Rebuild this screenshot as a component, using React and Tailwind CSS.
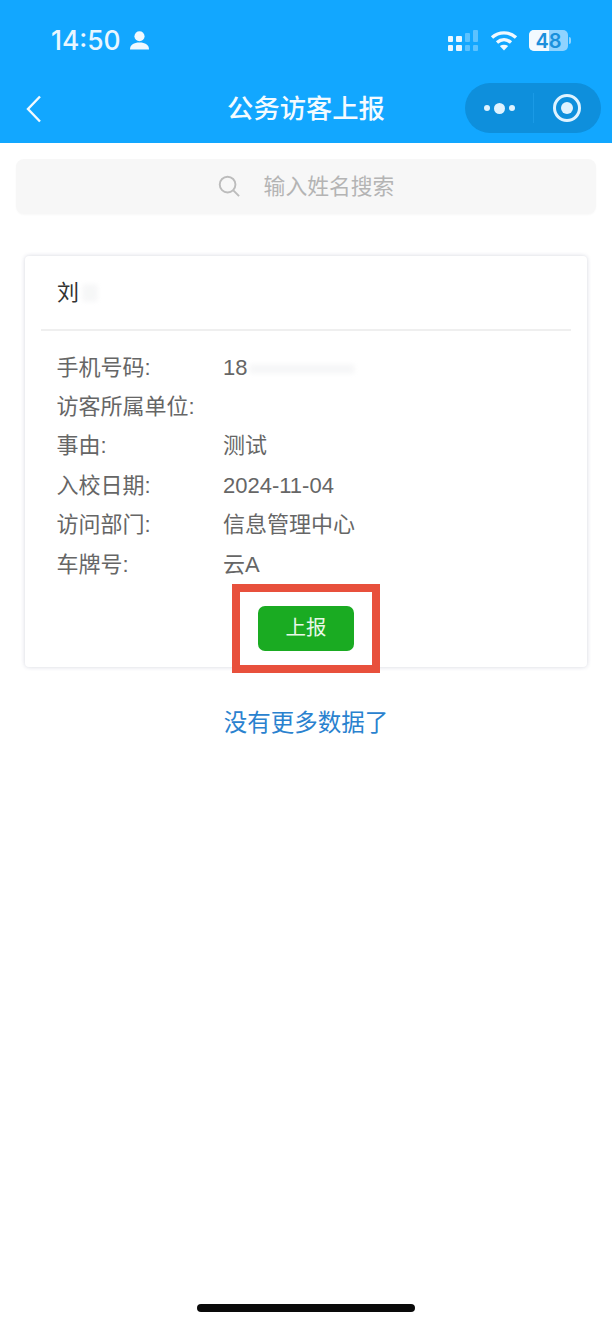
import React from 'react';

const rows = [
  { label: '手机号码:', value: '18', redacted: true },
  { label: '访客所属单位:', value: '' },
  { label: '事由:', value: '测试' },
  { label: '入校日期:', value: '2024-11-04' },
  { label: '访问部门:', value: '信息管理中心' },
  { label: '车牌号:', value: '云A' },
];

const fontStack = { fontFamily: '"Liberation Sans", "Noto Sans CJK SC", sans-serif' };

const StatusBar = () => (
  <div className="flex h-[82px] items-start justify-between pl-[51px] pr-[41px] pt-[24px]">
    <div className="flex items-center gap-[9px]">
      <span className="font-['Inter'] text-[26.4px] leading-[33px] font-medium text-[#e9f6ff]">14:50</span>
      <svg width="19" height="19" viewBox="1 1 18 18" fill="#f0f9ff">
        <circle cx="10" cy="6" r="4.8" />
        <path d="M1 18.5c0-4.6 3.6-6.6 9-6.6s9 2 9 6.6z" />
      </svg>
    </div>
    <div className="flex items-start gap-[11px] pt-[6px]">
      <svg width="31" height="22" viewBox="0 0 31 22">
        <rect x="0" y="6" width="5" height="6" rx="1" fill="#eaf7ff" />
        <rect x="0" y="15" width="5" height="6" rx="1" fill="#eaf7ff" />
        <rect x="8" y="6" width="6" height="6" rx="1" fill="#eaf7ff" />
        <rect x="8" y="15" width="6" height="6" rx="1" fill="#eaf7ff" />
        <rect x="17" y="3" width="5" height="9" rx="1" fill="#5cc2ff" />
        <rect x="17" y="15" width="5" height="6" rx="1" fill="#5cc2ff" />
        <rect x="25" y="0" width="5" height="12" rx="1" fill="#5cc2ff" />
        <rect x="25" y="15" width="5" height="6" rx="1" fill="#5cc2ff" />
      </svg>
      <svg width="28" height="21" viewBox="0 0 28 21" fill="none" stroke="#f0f9ff" strokeWidth="3.4">
        <path d="M2 7.5c7-6.2 17-6.2 24 0" />
        <path d="M7 12.5c4.2-3.6 9.8-3.6 14 0" />
        <path d="M14 20.5l-4.2-4.4c2.5-1.7 5.9-1.7 8.4 0z" fill="#f0f9ff" stroke="none" />
      </svg>
      <div className="flex items-center">
        <div className="relative flex h-[21px] w-[39px] items-center justify-center overflow-hidden rounded-[5px] bg-[#8fd3ff]">
          <div className="absolute inset-y-0 left-0 w-[20px] bg-[#f2faff]" />
          <span className="relative font-['Inter'] text-[20px] leading-none font-semibold text-[#1a90dc]">48</span>
        </div>
        <div className="ml-[1px] h-[7px] w-[2px] rounded-r-sm bg-[#8fd3ff]" />
      </div>
    </div>
  </div>
);

const NavBar = () => (
  <div className="relative flex h-[61px] items-start justify-center">
    <svg className="absolute left-[25px] top-[13px]" width="18" height="28" viewBox="0 0 18 28" fill="none" stroke="#f2faff" strokeWidth="2.4">
      <path d="M15 1.5L3 14l12 12.5" />
    </svg>
    <h1 className="pt-[10px] text-[26.3px] leading-[34px] font-medium text-[#f4fbff]">公务访客上报</h1>
    <div className="absolute left-[465px] top-[1px] flex h-[50px] w-[136px] items-center rounded-full bg-[#0e8fdc]">
      <div className="flex w-[68px] items-center justify-center gap-[4px]">
        <span className="h-[6px] w-[6px] rounded-full bg-[#dff3ff]" />
        <span className="h-[11px] w-[11px] rounded-full bg-[#dff3ff]" />
        <span className="h-[6px] w-[6px] rounded-full bg-[#dff3ff]" />
      </div>
      <div className="h-[30px] w-px bg-[#1a9ae6]" />
      <div className="flex flex-1 items-center justify-center pr-[2px]">
        <div className="flex h-[28px] w-[28px] items-center justify-center rounded-full border-[3px] border-[#dff3ff]">
          <span className="h-[12px] w-[12px] rounded-full bg-[#dff3ff]" />
        </div>
      </div>
    </div>
  </div>
);

const SearchBar = () => (
  <div className="mx-[16px] mt-[16px] flex h-[55px] items-center justify-center gap-[23px] rounded-[8px] bg-[#f7f7f7] shadow-[0_1px_2px_rgba(0,0,0,0.03)]">
    <svg width="23" height="23" viewBox="0 0 24 24" fill="none" stroke="#bcbcbc" strokeWidth="2">
      <circle cx="10" cy="10" r="8.2" />
      <path d="M16 16l6 6" />
    </svg>
    <span className="text-[21.8px] leading-none text-[#b4b4b4]">输入姓名搜索</span>
  </div>
);

const Smudge = ({ className }) => (
  <div className={`rounded-sm bg-[#e4e6e8] blur-[2px] ${className}`} />
);

const VisitorCard = () => (
  <div className="mx-[25px] mt-[42px] h-[411px] rounded-[4px] bg-white shadow-[0_0_4px_rgba(60,70,110,0.22)]">
    <div className="mx-[16px] flex h-[75px] items-center gap-[3px] border-b-2 border-[#efefef] pl-[16px]">
      <span className="text-[22px] leading-none text-[#333]">刘</span>
      <Smudge className="h-[18px] w-[16px] opacity-30" />
    </div>
    <div className="pl-[31.5px] pt-[17px]">
      {rows.map((row) => (
        <div key={row.label} className="flex h-[39.4px] items-center text-[22px] leading-none text-[#666]">
          <span className="w-[166.5px] shrink-0 whitespace-nowrap">{row.label}</span>
          <span className="whitespace-nowrap">{row.value}</span>
          {row.redacted && <Smudge className="ml-[2px] mt-[2px] h-[10px] w-[106px] opacity-30" />}
        </div>
      ))}
    </div>
    <div className="flex justify-center">
      <div className="relative flex h-[89px] w-[148px] items-start justify-center border-[8px] border-[#e8503c] pt-[14px]">
        <button className="h-[45px] w-[96px] rounded-[7px] bg-[#1aab22] text-[20.5px] text-[#e8f8e8]">上报</button>
      </div>
    </div>
  </div>
);

export default function App() {
  return (
    <div className="relative h-[1325px] w-[612px] overflow-hidden bg-white" style={fontStack}>
      <div className="bg-[#12a7ff]">
        <StatusBar />
        <NavBar />
      </div>
      <SearchBar />
      <VisitorCard />
      <p className="mt-[40px] text-center text-[23.5px] leading-[32px] text-[#2a82cf]">没有更多数据了</p>
      <div className="absolute bottom-[13px] left-[197px] h-[8px] w-[218px] rounded-full bg-[#0a0a0a]" />
    </div>
  );
}
